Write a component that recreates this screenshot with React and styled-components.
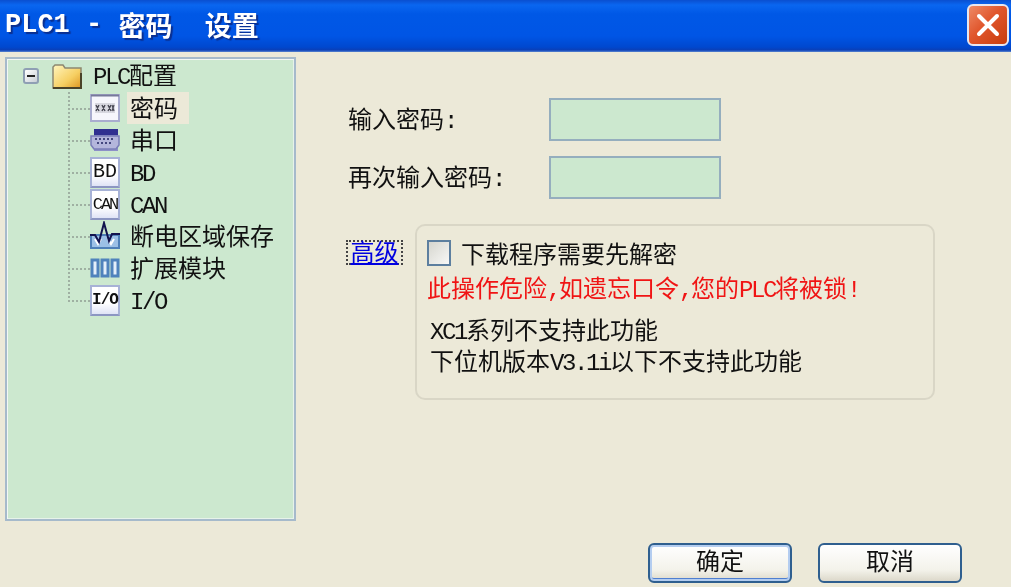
import React from 'react';
import styled, { createGlobalStyle } from 'styled-components';

const GlobalStyle = createGlobalStyle`
  html, body {
    margin: 0;
    padding: 0;
    background: #ece9d8;
  }
  * {
    box-sizing: border-box;
  }
`;

const Page = styled.div`
  width: 1011px;
  height: 587px;
  overflow: hidden;
  display: flex;
  flex-direction: column;
  background: #ece9d8;
  color: #111;
  font-family: "Noto Sans CJK SC", "Liberation Sans", sans-serif;
  font-size: 24px;
  line-height: 32px;
  filter: blur(0.4px);
`;

const Mono = styled.span`
  font-family: "Liberation Mono", monospace;
  font-size: 24px;
  letter-spacing: -2.4px;
`;

const TitleBar = styled.div`
  flex: 0 0 52px;
  display: flex;
  align-items: center;
  justify-content: space-between;
  padding: 0 2px 2px 5px;
  background: linear-gradient(to bottom, #0a4fd0 0, #0a66f0 5px, #0058e6 14px, #0055e5 36px, #0048cf 47px, #0a3fb8 50px, #5b86d0 52px);
`;

const TitleText = styled.div`
  display: flex;
  align-items: center;
  color: #fff;
  font-size: 27px;
  font-weight: 700;
  text-shadow: 2px 2px 1px #0a2f90;
  white-space: pre;

  ${Mono} {
    font-size: 27px;
    font-weight: 700;
    letter-spacing: 0;
  }
`;

const CloseButton = styled.div`
  width: 42px;
  height: 42px;
  display: flex;
  align-items: center;
  justify-content: center;
  border: 2px solid #e8e6ee;
  border-radius: 6px;
  background: linear-gradient(135deg, #ee8a66 0%, #e0562c 45%, #c83c0c 100%);
`;

const Body = styled.div`
  flex: 1;
  display: flex;
  align-items: stretch;
  padding: 5px 0 4px 5px;
`;

const Sidebar = styled.div`
  flex: 0 0 291px;
  height: 464px;
  padding: 1px 0 0 16px;
  background: #cce8cf;
  border: 2px solid #a6bacb;
  box-shadow: inset 1px 1px 0 #f2f7f4, inset -1px -1px 0 #e6f2ea;
`;

const TreeRoot = styled.div`
  height: 32px;
  display: flex;
  align-items: center;
  line-height: 30px;
`;

const Expander = styled.div`
  width: 16px;
  height: 16px;
  display: flex;
  align-items: center;
  justify-content: center;
  border: 2px solid #8f9fb4;
  border-radius: 3px;
  background: linear-gradient(135deg, #ffffff, #c9cfd6);

  &::after {
    content: '';
    width: 8px;
    height: 2px;
    background: #222;
  }
`;

const FolderWrap = styled.div`
  display: flex;
  margin: 0 11px 0 13px;
`;

const TreeChildren = styled.div`
  margin-left: 45px;
`;

const Row = styled.div`
  height: 32px;
  display: flex;
  align-items: center;
`;

const Elbow = styled.div`
  flex: 0 0 22px;
  height: 32px;
  background-image:
    repeating-linear-gradient(to bottom, #9fb0a2 0 2px, transparent 2px 4px),
    repeating-linear-gradient(to right, #9fb0a2 0 2px, transparent 2px 4px);
  background-repeat: no-repeat;
  background-size: 2px ${(p) => (p.$last ? '17px' : '32px')}, 22px 2px;
  background-position: 0 0, 0 16px;
`;

const IconSlot = styled.div`
  flex: 0 0 30px;
  width: 30px;
  height: 32px;
  display: flex;
  align-items: center;
  justify-content: center;
`;

const TextIcon = styled.div`
  width: 30px;
  height: 31px;
  display: flex;
  align-items: center;
  justify-content: center;
  border: 2px solid #a7b2d6;
  border-bottom-color: #8c96c2;
  background: linear-gradient(to bottom, #fff 60%, #dfe3f6);
  color: #111;
  font-family: "Liberation Mono", monospace;
  font-size: ${(p) => p.$size || 18}px;
  font-weight: ${(p) => p.$weight || 400};
  letter-spacing: ${(p) => p.$spacing || 0}px;
  line-height: 1;
`;

const RowLabel = styled.div`
  margin-left: 7px;
  padding: 0 11px 0 3px;
  height: 32px;
  line-height: 29px;
  white-space: nowrap;
  background: ${(p) => (p.$selected ? '#ece9d8' : 'transparent')};
`;

const Main = styled.div`
  flex: 1;
  display: flex;
  flex-direction: column;
  padding-left: 50px;
`;

const Form = styled.div`
  display: grid;
  grid-template-columns: 201px 172px;
  grid-auto-rows: 43px;
  row-gap: 15px;
  align-items: center;
  margin: 41px 0 0 2px;
`;

const FormLabel = styled.div`
  height: 43px;
  line-height: 40px;
  white-space: nowrap;

  ${Mono} {
    letter-spacing: -3.5px;
  }
`;

const Input = styled.div`
  height: 43px;
  background: #cce8cf;
  border: 2px solid #95aebe;
`;

const Advanced = styled.div`
  display: flex;
  align-items: flex-start;
  gap: 12px;
  margin-top: 25px;
`;

const AdvancedLink = styled.a`
  flex: 0 0 57px;
  height: 25px;
  margin-top: 16px;
  display: flex;
  align-items: center;
  justify-content: center;
  border: 2px dotted #444;
  color: #0000e0;
  text-decoration: underline;
  line-height: 19px;
  padding-bottom: 4px;
  cursor: pointer;
`;

const GroupBox = styled.div`
  width: 520px;
  height: 176px;
  padding: 12px 0 0 10px;
  border: 2px solid #d9d6c6;
  border-radius: 10px;
`;

const CheckRow = styled.div`
  height: 30px;
  display: flex;
  align-items: center;
  gap: 10px;
  line-height: 24px;
`;

const CheckBox = styled.div`
  width: 24px;
  height: 26px;
  border: 2px solid #5d7f9f;
  background: linear-gradient(135deg, #d6d6cf, #f8f8f6);
`;

const Warning = styled.div`
  margin-top: 4px;
  height: 32px;
  line-height: 30px;
  color: #f01414;
  white-space: nowrap;
`;

const Notes = styled.div`
  margin: 9px 0 0 3px;
  white-space: nowrap;
`;

const NoteLine = styled.div`
  height: 31px;
  line-height: 31px;
`;

const Footer = styled.div`
  margin-top: auto;
  display: flex;
  justify-content: flex-end;
  gap: 26px;
  padding-right: 49px;
`;

const Button = styled.button`
  width: 144px;
  height: 40px;
  padding: 0 0 6px;
  font: inherit;
  line-height: 30px;
  color: #111;
  border: 2px solid #2f5f8f;
  border-radius: 6px;
  background: linear-gradient(to bottom, #fff, #f3f2ea 70%, #dcd8ca);
  box-shadow: ${(p) => (p.$primary ? 'inset 0 0 0 2px #b4cdf0, inset 0 -2px 0 1px #4f7fd0' : 'none')};
`;

const CloseIcon = () => (
  <svg width="26" height="26" viewBox="0 0 26 26">
    <path d="M4 4L22 22M22 4L4 22" stroke="#fff" strokeWidth="4" strokeLinecap="round" />
  </svg>
);

const FolderIcon = () => (
  <svg width="30" height="25" viewBox="0 0 30 25">
    <defs>
      <linearGradient id="folder" x1="0" y1="0" x2="1" y2="1">
        <stop offset="0" stopColor="#fff6c0" />
        <stop offset="0.6" stopColor="#f6cf62" />
        <stop offset="1" stopColor="#dc9420" />
      </linearGradient>
    </defs>
    <path d="M1 24V3l2-2h8l2 3h16v20z" fill="url(#folder)" stroke="#8d8870" strokeWidth="1.5" />
    <path d="M1 24h28V9" fill="none" stroke="#4a4228" strokeWidth="2" />
  </svg>
);

const PasswordIcon = () => (
  <svg width="30" height="28" viewBox="0 0 30 28">
    <rect x="1" y="1" width="28" height="26" fill="#f6f6fc" stroke="#a9accf" strokeWidth="2" />
    <path d="M1 1.5h28" stroke="#77799a" strokeWidth="2" />
    <rect x="5" y="9" width="20" height="10" fill="#d8d8e0" />
    <path d="M6 11l3 6M9 11l-3 6M12 11l3 6M15 11l-3 6M18 11l3 6M21 11l-3 6" stroke="#4a4a55" strokeWidth="1.4" />
    <path d="M22 11l2 6M24 11l-2 6" stroke="#4a4a55" strokeWidth="1.2" />
  </svg>
);

const SerialIcon = () => (
  <svg width="30" height="24" viewBox="0 0 30 24">
    <path d="M4 1h24v22H4z" fill="#8d90c8" />
    <rect x="4" y="1" width="24" height="6" fill="#303090" />
    <path d="M1 8h28v9l-3 4H4l-3-4z" fill="#b4b6dc" stroke="#7a7db8" strokeWidth="1.5" />
    <path d="M5 11h20M7 15h16" stroke="#44477f" strokeWidth="2" strokeDasharray="2 2" />
  </svg>
);

const WaveIcon = () => (
  <svg width="30" height="30" viewBox="0 0 30 30">
    <rect x="1" y="14" width="28" height="13" fill="#9cc0e6" stroke="#4f80b8" strokeWidth="2" />
    <path d="M5 18l3 5 3-5M18 18l3 5 3-5" fill="none" stroke="#fff" strokeWidth="2" />
    <path d="M0 14h5l4 7 5-19 5 18 3-7h8" fill="none" stroke="#12124e" strokeWidth="2" />
  </svg>
);

const ModuleIcon = () => (
  <svg width="30" height="20" viewBox="0 0 30 20">
    <g fill="#e4eefa" stroke="#4f82bc" strokeWidth="3">
      <rect x="2" y="2" width="6" height="16" />
      <rect x="12" y="2" width="6" height="16" />
      <rect x="22" y="2" width="6" height="16" />
    </g>
  </svg>
);

const items = [
  { key: 'pwd', icon: <PasswordIcon />, label: '密码', selected: true },
  { key: 'serial', icon: <SerialIcon />, label: '串口' },
  { key: 'bd', icon: <TextIcon $size={20}>BD</TextIcon>, label: <Mono>BD</Mono> },
  { key: 'can', icon: <TextIcon $size={17} $spacing={-2}>CAN</TextIcon>, label: <Mono>CAN</Mono> },
  { key: 'save', icon: <WaveIcon />, label: '断电区域保存' },
  { key: 'ext', icon: <ModuleIcon />, label: '扩展模块' },
  { key: 'io', icon: <TextIcon $size={16} $spacing={-1} $weight={700}>I/O</TextIcon>, label: <Mono>I/O</Mono> },
];

export default function App() {
  return (
    <Page>
      <GlobalStyle />
      <TitleBar>
        <TitleText>
          <Mono>PLC1 - </Mono>密码<Mono>  </Mono>设置
        </TitleText>
        <CloseButton>
          <CloseIcon />
        </CloseButton>
      </TitleBar>
      <Body>
        <Sidebar>
          <TreeRoot>
            <Expander />
            <FolderWrap>
              <FolderIcon />
            </FolderWrap>
            <div>
              <Mono>PLC</Mono>配置
            </div>
          </TreeRoot>
          <TreeChildren>
            {items.map((item, i) => (
              <Row key={item.key}>
                <Elbow $last={i === items.length - 1} />
                <IconSlot>{item.icon}</IconSlot>
                <RowLabel $selected={item.selected}>{item.label}</RowLabel>
              </Row>
            ))}
          </TreeChildren>
        </Sidebar>
        <Main>
          <Form>
            <FormLabel>
              输入密码<Mono>:</Mono>
            </FormLabel>
            <Input />
            <FormLabel>
              再次输入密码<Mono>:</Mono>
            </FormLabel>
            <Input />
          </Form>
          <Advanced>
            <AdvancedLink>高级</AdvancedLink>
            <GroupBox>
              <CheckRow>
                <CheckBox />
                下载程序需要先解密
              </CheckRow>
              <Warning>
                此操作危险<Mono>,</Mono>如遗忘口令<Mono>,</Mono>您的<Mono>PLC</Mono>将被锁<Mono>!</Mono>
              </Warning>
              <Notes>
                <NoteLine>
                  <Mono>XC1</Mono>系列不支持此功能
                </NoteLine>
                <NoteLine>
                  下位机版本<Mono>V3.1i</Mono>以下不支持此功能
                </NoteLine>
              </Notes>
            </GroupBox>
          </Advanced>
          <Footer>
            <Button $primary>确定</Button>
            <Button>取消</Button>
          </Footer>
        </Main>
      </Body>
    </Page>
  );
}
